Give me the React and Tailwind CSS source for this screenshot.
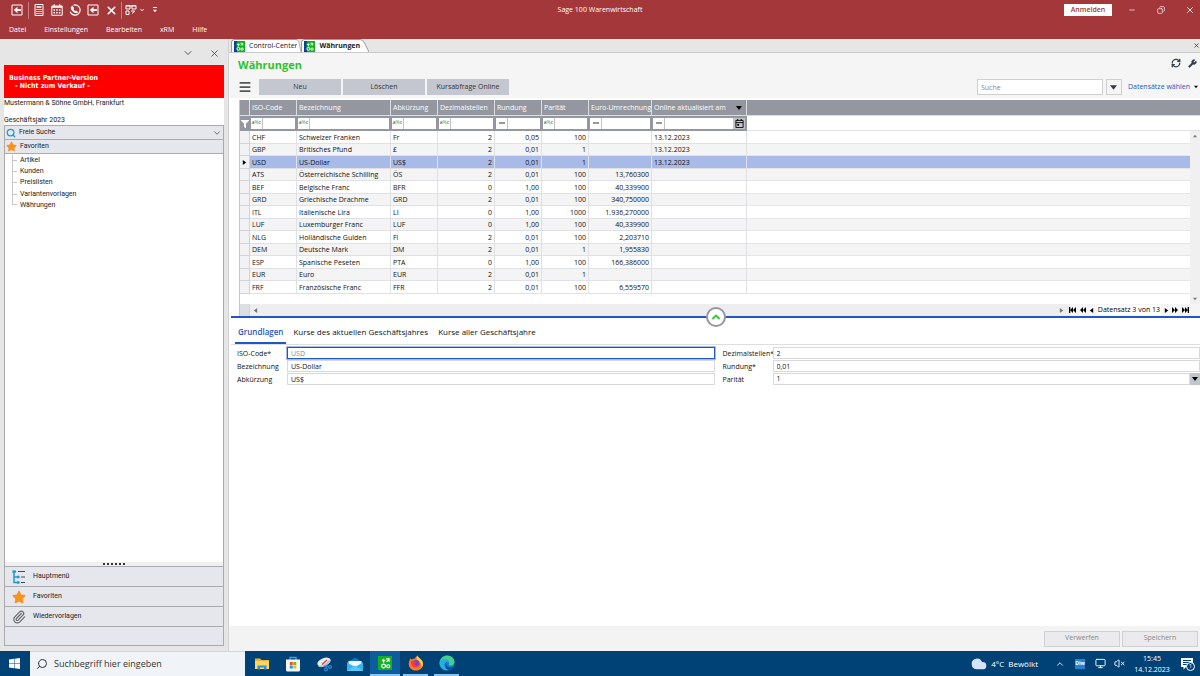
import { useState } from "react";
import {
    ChevronDown,
    ChevronUp,
    Cloud,
    Copy,
    Menu,
    Minus,
    Monitor,
    Paperclip,
    RefreshCw,
    Search,
    VolumeX,
    Wrench,
    X
} from "lucide-react";
import { FaStar, FaFilter } from "react-icons/fa";

const menuItems = ["Datei", "Einstellungen", "Bearbeiten", "xRM", "Hilfe"];

const favorites = ["Artikel", "Kunden", "Preislisten", "Variantenvorlagen", "Währungen"];

const columns = [
    { key: "iso", label: "ISO-Code", width: "w-[47px]", filter: "text" },
    { key: "name", label: "Bezeichnung", width: "w-[94px]", filter: "text" },
    { key: "short", label: "Abkürzung", width: "w-[47px]", filter: "text" },
    { key: "decimals", label: "Dezimalstellen", width: "w-[57px]", filter: "text", right: true },
    { key: "rounding", label: "Rundung", width: "w-[47px]", filter: "equal", right: true },
    { key: "parity", label: "Parität", width: "w-[47px]", filter: "text", right: true },
    { key: "rate", label: "Euro-Umrechnung", width: "w-[63px]", filter: "equal", right: true },
    { key: "updated", label: "Online aktualisiert am", width: "w-[95px]", filter: "equal" }
];

const currencies = [
    { iso: "CHF", name: "Schweizer Franken", short: "Fr", decimals: "2", rounding: "0,05", parity: "100", rate: "", updated: "13.12.2023" },
    { iso: "GBP", name: "Britisches Pfund", short: "£", decimals: "2", rounding: "0,01", parity: "1", rate: "", updated: "13.12.2023" },
    { iso: "USD", name: "US-Dollar", short: "US$", decimals: "2", rounding: "0,01", parity: "1", rate: "", updated: "13.12.2023" },
    { iso: "ATS", name: "Österreichische Schilling", short: "ÖS", decimals: "2", rounding: "0,01", parity: "100", rate: "13,760300", updated: "" },
    { iso: "BEF", name: "Belgische Franc", short: "BFR", decimals: "0", rounding: "1,00", parity: "100", rate: "40,339900", updated: "" },
    { iso: "GRD", name: "Griechische Drachme", short: "GRD", decimals: "2", rounding: "0,01", parity: "100", rate: "340,750000", updated: "" },
    { iso: "ITL", name: "Italienische Lira", short: "LI", decimals: "0", rounding: "1,00", parity: "1000", rate: "1.936,270000", updated: "" },
    { iso: "LUF", name: "Luxemburger Franc", short: "LUF", decimals: "0", rounding: "1,00", parity: "100", rate: "40,339900", updated: "" },
    { iso: "NLG", name: "Holländische Gulden", short: "Fl", decimals: "2", rounding: "0,01", parity: "100", rate: "2,203710", updated: "" },
    { iso: "DEM", name: "Deutsche Mark", short: "DM", decimals: "2", rounding: "0,01", parity: "1", rate: "1,955830", updated: "" },
    { iso: "ESP", name: "Spanische Peseten", short: "PTA", decimals: "0", rounding: "1,00", parity: "100", rate: "166,386000", updated: "" },
    { iso: "EUR", name: "Euro", short: "EUR", decimals: "2", rounding: "0,01", parity: "1", rate: "", updated: "" },
    { iso: "FRF", name: "Französische Franc", short: "FFR", decimals: "2", rounding: "0,01", parity: "100", rate: "6,559570", updated: "" }
];

const detailTabs = ["Grundlagen", "Kurse des aktuellen Geschäftsjahres", "Kurse aller Geschäftsjahre"];

const Triangle = ({ className, points }) => (
    <svg viewBox="0 0 6 6" className={className} fill="currentColor" aria-hidden="true">
        <path d={points} />
    </svg>
);

const DOWN = "M0 1h6L3 5z";
const UP = "M0 5h6L3 1z";
const LEFT = "M5 0v6L1 3z";
const RIGHT = "M1 0v6l4-3z";

// Double arrow of the record navigator, optionally with an end bar
const SkipIcon = ({ bar, back }) => (
    <svg viewBox="0 0 7 6" className={`h-[6px] w-[7px] ${back ? "-scale-x-100" : ""}`} fill="currentColor" aria-hidden="true">
        <path d="M0 0v6l3-3zM3 0v6l3-3z" />
        {bar && <path d="M5.700 0H7v6H5.700z" />}
    </svg>
);

const ExitIcon = () => (
    <svg viewBox="0 0 12 12" className="size-3" fill="none" stroke="currentColor">
        <path d="M1 1h10v10H1z" />
        <path d="M10 6H4" strokeWidth="1.800" />
        <path d="M6.500 2.800v6.400L2.800 6z" fill="currentColor" stroke="none" />
    </svg>
);

const CalculatorIcon = () => (
    <svg viewBox="0 0 12 12" className="size-3" fill="none" stroke="currentColor">
        <path d="M2 .5h8v11H2z" />
        <path d="M3.500 3h5" strokeWidth="1.500" />
        <path d="M3.300 5.500h5.400M3.300 7.500h5.400M3.300 9.500h5.400" strokeWidth="1.200" strokeDasharray="1.400 .6" />
    </svg>
);

const CalendarIcon = ({ className }) => (
    <svg viewBox="0 0 12 12" className={className} fill="none" stroke="currentColor">
        <path d="M.8 2h10.400v9.300H.8z" />
        <path d="M1 3h10" strokeWidth="1.600" />
        <path d="M3.300.3v2M8.700.3v2" strokeWidth="1.200" />
        <path d="M2.500 6h7M2.500 8.800h7" strokeWidth="1.400" strokeDasharray="1.500 1.200" />
    </svg>
);

const DatePickerIcon = () => (
    <svg viewBox="0 0 10 10" className="size-[9px]" fill="none" stroke="currentColor">
        <path d="M1 1.500h8v8H1zM1 4h8" />
        <path d="M3 0v2M7 0v2" />
        <path d="M2.500 5.500h2v2h-2z" fill="currentColor" stroke="none" />
    </svg>
);

const PhoneIcon = () => (
    <svg viewBox="0 0 12 12" className="size-3" fill="none" stroke="currentColor">
        <path d="M4.400 1.200A5.100 5.100 0 1 1 1.200 7.800" strokeWidth="1.200" />
        <path d="M3.200 1.500 1.800 3.200c-.2 3 3.200 6.200 6.200 6l1-1.300-1.800-1.300-1 .7C5.500 6.700 4.800 6 4.500 5.100l.6-1z" fill="currentColor" stroke="none" />
    </svg>
);

const WindowsLayoutIcon = () => (
    <svg viewBox="0 0 12 12" className="size-3" fill="none" stroke="currentColor">
        <path d="M1 1.500h4v3.500H1zM7 1.500h4v3.500H7zM1 7h3v3.500H1zM6 7h3.500" />
        <path d="M1 2h10M7 9.500l3-2.500" />
    </svg>
);

const SageIcon = ({ className, stripe }) => (
    <svg viewBox="0 0 12 12" className={className} aria-hidden="true">
        <rect width="12" height="12" fill="#10b020" />
        {stripe && <path d="M0 0h3.500L2.500 3.500 3.500 12H0z" fill="#0b3f9c" />}
        <g fill="none" stroke="#fff" strokeWidth="1">
            <circle cx="8.800" cy="8.800" r="1.300" />
            <circle cx="4.800" cy="8.600" r="1.600" />
            <path d="M4.800 5.800V3M3.500 4.300 4.800 3l1.300 1.300M7 2.500h2.500V5M7.300 5l2.200-2.200" />
        </g>
    </svg>
);

const TreeIcon = () => (
    <svg viewBox="0 0 14 14" className="size-[14px]" fill="none" strokeWidth="1.500">
        <path d="M2 1v11.500h4M2 7h4M1 1.500h3" stroke="#1c9ad6" />
        <path d="M6 1.500h7M9 7h4M9 12.500h4" stroke="#444b5c" strokeWidth="1" />
        <path d="M5 5.800h2.500v2.400H5zM5 11.300h2.500v2.400H5zM.5.500h3v2.400h-3z" fill="#1c9ad6" />
    </svg>
);

const ExplorerIcon = () => (
    <svg viewBox="0 0 16 16" className="size-4">
        <path d="M1 2.500h5l1.500 1.500H15V13H1z" fill="#f0b22e" />
        <path d="M1 5h14v8H1z" fill="#ffd661" />
        <path d="M3.500 13.500v-4h9v4H10V11.500H6v2z" fill="#2e8fd8" />
    </svg>
);

const StoreIcon = () => (
    <svg viewBox="0 0 16 16" className="size-4">
        <path d="M5 4V1.500h6V4" fill="none" stroke="#38a6e0" strokeWidth="1.300" />
        <path d="M1 3.500h14V14q0 1.500-1.500 1.500h-11Q1 15.500 1 14z" fill="#f4f6f8" />
        <path d="M4.800 6h3v3h-3z" fill="#f25022" />
        <path d="M8.300 6h3v3h-3z" fill="#7fba00" />
        <path d="M4.800 9.500h3v3h-3z" fill="#00a4ef" />
        <path d="M8.300 9.500h3v3h-3z" fill="#ffb900" />
    </svg>
);

const SnippingIcon = () => (
    <svg viewBox="0 0 16 16" className="size-4">
        <ellipse cx="8" cy="6" rx="7" ry="3.800" fill="#e8eaee" transform="rotate(-22 8 6)" />
        <path d="M2 9c3 2 8-1 11-5l1.500 1C12 10 5 13 2 10z" fill="#b9bec8" />
        <path d="M6 8.500 11 4" stroke="#d23c3c" strokeWidth="1.200" />
        <g fill="none" stroke="#2f86d0" strokeWidth="1.200">
            <circle cx="10" cy="13.500" r="1.400" />
            <circle cx="14" cy="11" r="1.400" />
            <path d="m10 12 1-3M13 10.500 8 10" />
        </g>
    </svg>
);

const MailIcon = () => (
    <svg viewBox="0 0 16 16" className="size-4">
        <path d="M0 6.500 8 1.500l8 5V14H0z" fill="#1474c4" />
        <path d="M1.500 5h13v6h-13z" fill="#f3f7fb" />
        <path d="m0 6.500 8 4.500 8-4.500V15H0z" fill="#35b3ee" />
        <path d="M0 15 8 9.500 16 15z" fill="#5cc8f5" />
    </svg>
);

const FirefoxIcon = () => (
    <svg viewBox="0 0 16 16" className="size-4">
        <path d="M2.200 3.200 4 4.800C5 3.500 6 3.500 7.200 3.500 7.400 2 8.500 1 9.600.5c.2 2 3.600 3.300 4.800 6C16.500 11 13 15.500 8 15.500S-.6 11 1.200 6.500c.3-1 .6-2.200 1-3.300z" fill="#ff7a1a" />
        <path d="M9.600.5c.2 2 3.600 3.300 4.800 6 1 2.500.2 4.800-.8 6.200C14 8 11 6 9 4.500 8.500 3 9 1.500 9.600.5z" fill="#ffd52e" />
        <circle cx="8" cy="8.500" r="3.500" fill="#7a3fd1" />
        <path d="M3 6.500c1.500-1 3-.5 4 .3l1.800.2c-.5 1-1.500 1-2 1.500.3 2.500 3.500 2.500 5 1-1 3.500-7 4-8.300 0C3.200 8.500 2.800 7.500 3 6.500z" fill="#f5364c" />
    </svg>
);

const EdgeIcon = () => (
    <svg viewBox="0 0 16 16" className="size-4">
        <circle cx="8" cy="8" r="7.500" fill="#1680d0" />
        <path d="M.6 7.200C1.500 2.500 5 .5 8.200.5c4.500 0 7.300 3.200 7.300 6.300 0 2.200-1.700 3.700-3.800 3.700-1.600 0-2.300-.7-1.800-1.300C10.900 7.500 9.500 5 6.500 5 4 5 1.800 5.500.6 7.200z" fill="#45d08c" />
        <path d="M.6 7.200C2 4.500 4.500 3.800 6.500 4 9 4.200 10.500 6 10.500 7.500L8 6.500C5.500 7 5 9.500 6 12c.8 1.800 2.500 3 4 3C5 16.500-.3 12.500.6 7.200z" fill="#28aee0" />
        <path d="M8 6.500C6.500 8 7 10.500 9 11.700c1.800 1 4 .7 5.300 0-.8 1.500-2.300 2.700-4.300 3.300C6 14 4.500 9 8 6.500z" fill="#0b4f9f" />
    </svg>
);

const TitleBar = () => (
    <header className="bg-[#a4373a] text-white">
        <div className="grid h-5 grid-cols-[1fr_auto_1fr] items-center">
            <div className="flex items-center pl-[11px]">
                <button aria-label="Beenden"><ExitIcon /></button>
                <span className="mr-1 ml-[5px] h-[17px] w-px bg-[#c98082]" />
                <div className="flex gap-[6px]">
                    <button aria-label="Rechner"><CalculatorIcon /></button>
                    <button aria-label="Kalender"><CalendarIcon className="size-3" /></button>
                    <button aria-label="Telefon"><PhoneIcon /></button>
                    <button aria-label="Abmelden"><ExitIcon /></button>
                    <button aria-label="Schließen"><X className="size-[13px]" strokeWidth={3} /></button>
                </div>
                <span className="mr-[3px] ml-[3px] h-[17px] w-px bg-[#c98082]" />
                <button aria-label="Fenster" className="flex items-center gap-[2px]">
                    <WindowsLayoutIcon />
                    <ChevronDown className="size-[6px]" strokeWidth={4} />
                </button>
                <button aria-label="Symbolleiste anpassen" className="ml-2 flex flex-col items-center gap-px">
                    <span className="h-px w-1 bg-white" />
                    <Triangle className="size-1" points={DOWN} />
                </button>
            </div>
            <h1 className="text-[7px]">Sage 100 Warenwirtschaft</h1>
            <div className="flex items-center justify-end pr-[5px]">
                <button className="mr-[15px] h-3 w-12 bg-white text-[7px] leading-3 font-semibold text-[#a4373a]">Anmelden</button>
                <button aria-label="Minimieren" className="flex w-[29px] justify-start pl-px"><Minus className="size-2" strokeWidth={2} /></button>
                <button aria-label="Wiederherstellen" className="flex w-[29px] justify-start pl-px"><Copy className="size-2 -scale-x-100" strokeWidth={2} /></button>
                <button aria-label="Fenster schließen"><X className="size-[10px]" strokeWidth={2} /></button>
            </div>
        </div>
        <nav className="flex h-[19px] items-center gap-[18px] pt-px pl-[9px] text-[7px]">
            {menuItems.map((item) => (
                <button key={item}>{item}</button>
            ))}
        </nav>
    </header>
);

const Sidebar = () => (
    <aside className="flex w-[229px] shrink-0 flex-col border-r border-[#d2d2d2] bg-[#e6e6e6] pr-1 pb-[5px] pl-1 font-['Roboto',sans-serif] text-[7px] text-[#222]">
        <div className="flex h-[26px] shrink-0 items-center justify-end gap-[15px] pt-[2px] pr-1 text-[#555]">
            <button aria-label="Einklappen"><ChevronDown className="size-3" strokeWidth={2} /></button>
            <button aria-label="Bereich schließen"><X className="size-[11px]" strokeWidth={2} /></button>
        </div>
        <div className="flex h-[33px] shrink-0 flex-col justify-center bg-[#ff0000] pl-[5px] font-['DejaVu_Sans_Condensed','DejaVu_Sans',sans-serif] leading-2 font-bold text-white">
            <p>Business Partner-Version</p>
            <p className="pl-[6px]">- Nicht zum Verkauf -</p>
        </div>
        <div className="flex h-[27px] shrink-0 flex-col justify-between bg-white leading-[10px]">
            <p>Mustermann &amp; Söhne GmbH, Frankfurt</p>
            <p>Geschäftsjahr 2023</p>
        </div>
        <div className="flex min-h-0 flex-1 flex-col border border-[#a9abb0] bg-white">
            <button className="flex h-[14px] shrink-0 items-center border-b border-[#a9abb0] bg-[#e5e7ec] px-px">
                <Search className="size-[10px] text-[#1c9ad6]" strokeWidth={3} />
                <span className="flex-1 pl-[3px] text-left">Freie Suche</span>
                <ChevronDown className="size-[10px] text-[#555]" />
            </button>
            <h2 className="flex h-[14px] shrink-0 items-center border-b border-[#a9abb0] bg-[#e5e7ec] px-px">
                <FaStar className="size-[11px] text-[#f7941e]" />
                <span className="pl-[3px]">Favoriten</span>
            </h2>
            <ul className="grid h-[57px] shrink-0 grid-rows-5 pt-px">
                {favorites.map((item, i) => (
                    <li key={item} className="flex items-center pl-[7px]">
                        <span className={i === favorites.length - 1 ? "h-1/2 w-[5px] self-start border-b border-l border-[#c8c8c8]" : "flex h-full w-[5px] items-center border-l border-[#c8c8c8]"}>
                            {i < favorites.length - 1 && <span className="h-px w-full bg-[#c8c8c8]" />}
                        </span>
                        <a href="#" className="pl-[3px] leading-[11px]">{item}</a>
                    </li>
                ))}
            </ul>
            <div className="mt-auto flex h-1 shrink-0 items-center justify-center bg-[#f0f0f0]">
                <span className="w-[22px] border-t-2 border-dotted border-[#333]" />
            </div>
            <nav className="shrink-0 bg-[#e5e7ec]">
                <button className="flex h-5 w-full items-center gap-[7px] border-t border-[#a9abb0] pl-[7px]">
                    <TreeIcon />Hauptmenü
                </button>
                <button className="flex h-5 w-full items-center gap-[7px] border-t border-[#a9abb0] pl-[7px]">
                    <FaStar className="size-[14px] text-[#f7941e]" />Favoriten
                </button>
                <button className="flex h-5 w-full items-center gap-[7px] border-t border-[#a9abb0] pl-[7px]">
                    <Paperclip className="size-[14px] text-[#666]" />Wiedervorlagen
                </button>
                <div className="h-[19px] border-t border-[#a9abb0]" />
            </nav>
        </div>
    </aside>
);

const DocumentTab = ({ label, active }) => (
    <button className="flex h-full items-end" aria-current={active}>
        <span className={`flex h-[13px] items-center gap-1 rounded-tl border-t border-l border-[#9a9a9a] bg-white pl-[2px] text-[7px] text-[#222] ${active ? "font-bold" : ""}`}>
            <SageIcon className="size-[11px]" stripe />
            {label}
        </span>
        <svg viewBox="0 0 9 13" className={active ? "h-[13px] w-[9px]" : "h-[13px] w-1"} preserveAspectRatio="none">
            <path d="M0 .5Q3 .5 4.500 4L9 13H0z" fill="#fff" />
            <path d="M0 .5Q3 .5 4.500 4L9 13" fill="none" stroke="#9a9a9a" />
        </svg>
    </button>
);

const FilterCell = ({ column }) => (
    <div className="flex h-[13px] items-stretch bg-[#9497a0] p-px pr-[2px]">
        <span className="flex w-3 shrink-0 items-center justify-center border-r border-[#c4c4c4] bg-white text-[5px] text-[#333]">
            {column.filter === "equal" ? (
                <span className="h-[2px] w-[6px] bg-[#999]" />
            ) : (
                <span>a<span className="text-[#2fb52f]">%</span>c</span>
            )}
        </span>
        <input aria-label={`Filter ${column.label}`} className="min-w-0 flex-1 bg-white outline-none" />
        {column.key === "updated" && (
            <button aria-label="Datum wählen" className="flex w-3 items-center justify-center bg-[#c3c5cc] text-black">
                <DatePickerIcon />
            </button>
        )}
    </div>
);

const CurrencyTable = ({ selected, onSelect }) => (
    <table className="w-full table-fixed border-separate border-spacing-0 border-l border-[#c4c6cc] text-[7px] text-[#111]">
        <colgroup>
            <col className="w-[10px]" />
            {columns.map((column) => (
                <col key={column.key} className={column.width} />
            ))}
            <col />
            <col className="w-[10px]" />
        </colgroup>
        <thead>
            <tr className="h-4 bg-[#9497a0] text-white">
                <th className="border-r border-b border-[#dcdde0] p-0" />
                {columns.map((column) => (
                    <th key={column.key} className="border-r border-b border-[#dcdde0] p-0 pl-[2px] text-left font-normal whitespace-nowrap">
                        <span className="flex items-center justify-between leading-3">
                            {column.label}
                            {column.key === "updated" && <Triangle className="mr-1 size-[6px] text-black" points={DOWN} />}
                        </span>
                    </th>
                ))}
                <th colSpan={2} className="border-b border-[#dcdde0] p-0" />
            </tr>
            <tr className="h-[15px]">
                <td className="bg-[#9497a0] p-0 text-white"><FaFilter className="mx-auto size-2" /></td>
                {columns.map((column) => (
                    <td key={column.key} className="border-b border-[#9497a0] bg-[#9497a0] p-0"><FilterCell column={column} /></td>
                ))}
                <td colSpan={2} className="border-b border-[#e2e2e4] p-0" />
            </tr>
        </thead>
        <tbody>
            {currencies.map((row, i) => {
                const active = row.iso === selected;
                return (
                    <tr
                        key={row.iso}
                        onClick={() => onSelect(row.iso)}
                        className={`odd:h-[13px] even:h-3 ${active ? "bg-[#a8bbe8]" : "odd:bg-white even:bg-[#f4f4f4]"}`}
                    >
                        <td className="border-r border-b border-[#d0d2d8] bg-[#f2f2f4] p-0">
                            {active && <Triangle className="mx-auto size-[5px] text-black" points={RIGHT} />}
                        </td>
                        {columns.map((column) => (
                            <td
                                key={column.key}
                                className={`overflow-hidden border-r border-b border-[#e0e1e4] p-0 px-[2px] leading-[11px] whitespace-nowrap ${column.right ? "text-right" : ""}`}
                            >
                                {row[column.key]}
                            </td>
                        ))}
                        <td className="border-b border-[#e6e6e8] p-0" />
                        {i === 0 && (
                            <td rowSpan={currencies.length + 1} className="h-px bg-[#f0f0f1] p-0 text-[#777]">
                                <div className="flex h-full flex-col items-center justify-between py-[3px]">
                                    <Triangle className="size-1" points={UP} />
                                    <Triangle className="size-1" points={DOWN} />
                                </div>
                            </td>
                        )}
                    </tr>
                );
            })}
            <tr className="h-[10px]">
                <td colSpan={columns.length + 2} className="p-0" />
            </tr>
        </tbody>
    </table>
);

const RecordNavigator = () => (
    <div className="flex h-3 items-center border-l border-[#c4c6cc] bg-[#eeeef0] text-[#777]">
        <span className="h-full w-[10px] border-r border-[#d0d2d8] bg-[#dddfe3]" />
        <button aria-label="Nach links" className="pl-[3px]"><Triangle className="size-[5px]" points={LEFT} /></button>
        <button aria-label="Nach rechts" className="mr-[5px] ml-auto"><Triangle className="size-[5px]" points={RIGHT} /></button>
        <div className="flex h-full items-center gap-[3px] bg-[#f5f5f6] pr-[11px] text-[7px] text-black">
            <button aria-label="Erster Datensatz"><SkipIcon bar back /></button>
            <button aria-label="Seite zurück"><SkipIcon back /></button>
            <button aria-label="Vorheriger Datensatz"><Triangle className="size-[5px]" points={LEFT} /></button>
            <span className="bg-white px-px leading-[10px]">Datensatz 3 von 13</span>
            <button aria-label="Nächster Datensatz"><Triangle className="size-[5px]" points={RIGHT} /></button>
            <button aria-label="Seite vor"><SkipIcon /></button>
            <button aria-label="Letzter Datensatz"><SkipIcon bar /></button>
        </div>
    </div>
);

const Field = ({ id, label, value, disabled }) => (
    <>
        <label htmlFor={id} className="leading-[11px]">{label}</label>
        <input
            id={id}
            key={value}
            defaultValue={value}
            readOnly={disabled}
            className={`h-3 w-full min-w-0 border bg-white px-[3px] outline-none ${disabled ? "border-[#1f57c3] text-[#888] ring-1 ring-[#1f57c3]/40" : "border-[#d9d9db]"}`}
        />
    </>
);

const Details = ({ row }) => {
    const [tab, setTab] = useState(detailTabs[0]);

    return (
        <section className="relative ml-[2px] flex-1 border-t-2 border-[#1f57c3]">
            <button
                aria-label="Details einklappen"
                className="absolute -top-[11px] left-1/2 flex size-5 -translate-x-1/2 items-center justify-center rounded-full border-2 border-[#9497a0] bg-white"
            >
                <ChevronUp className="size-3 text-[#3cc73c]" strokeWidth={4} />
            </button>
            <div className="flex h-[27px] gap-1 border-b border-[#dedede] pl-1 text-[8px]">
                {detailTabs.map((item) => (
                    <button
                        key={item}
                        onClick={() => setTab(item)}
                        className={`border-b-2 px-[3px] pt-[3px] ${item === tab ? "border-[#1f57c3] font-semibold text-[#1f57c3]" : "border-transparent text-[#111]"}`}
                    >
                        {item}
                    </button>
                ))}
            </div>
            <form className="grid grid-cols-2 gap-2 pt-[2px] pl-[6px] text-[7px] text-[#111]">
                <div className="grid grid-cols-[50px_1fr] items-center gap-y-px">
                    <Field id="iso" label="ISO-Code*" value={row.iso} disabled />
                    <Field id="name" label="Bezeichnung" value={row.name} />
                    <Field id="short" label="Abkürzung" value={row.short} />
                </div>
                <div className="grid grid-cols-[50px_1fr] items-center gap-y-px">
                    <Field id="decimals" label="Dezimalstellen*" value={row.decimals} />
                    <Field id="rounding" label="Rundung*" value={row.rounding} />
                    <label htmlFor="parity" className="leading-[11px]">Parität</label>
                    <div className="flex h-3">
                        <select id="parity" className="min-w-0 flex-1 appearance-none border border-[#d9d9db] bg-white px-[3px]">
                            <option>{row.parity}</option>
                        </select>
                        <span className="flex w-[10px] items-center justify-center bg-[#c3c5cc]"><Triangle className="size-[6px] text-black" points={DOWN} /></span>
                    </div>
                </div>
            </form>
        </section>
    );
};

const Taskbar = () => (
    <footer className="flex h-[25px] shrink-0 items-center bg-[#004275] text-[8px] text-white">
        <button aria-label="Start" className="flex h-full w-[30px] items-center justify-center pr-[2px]">
            <svg viewBox="0 0 11 11" className="size-[11px]" fill="currentColor">
                <path d="M0 1.500 5 .8v4.400H0zM5.500.7 11 0v5.200H5.500zM0 5.800h5v4.400l-5-.7zM5.500 5.800H11V11l-5.500-.7z" />
            </svg>
        </button>
        <label className="flex h-full w-[215px] items-center gap-[6px] border-t border-[#cfd6dd] bg-[#f0f4f8] pl-[6px] text-[#333]">
            <Search className="size-3 -scale-x-100" strokeWidth={2} />
            <input placeholder="Suchbegriff hier eingeben" className="min-w-0 flex-1 text-[9px] outline-none placeholder:text-[#333]" />
        </label>
        <div className="flex h-full items-center pl-px">
            <button aria-label="Explorer" className="flex h-full w-[31px] items-center justify-center"><ExplorerIcon /></button>
            <button aria-label="Store" className="flex h-full w-[31px] items-center justify-center"><StoreIcon /></button>
            <button aria-label="Snipping Tool" className="flex h-full w-[31px] items-center justify-center"><SnippingIcon /></button>
            <button aria-label="Mail" className="flex h-full w-[31px] items-center justify-center"><MailIcon /></button>
            <button aria-label="Sage 100" className="flex h-full w-[30px] items-center justify-center border-b-2 border-[#8cc4f0] bg-[#0c5c9e]"><SageIcon className="size-[14px]" /></button>
            <button aria-label="Firefox" className="mx-[3px] flex h-full w-[25px] items-center justify-center border-b-2 border-[#8cc4f0]"><FirefoxIcon /></button>
            <button aria-label="Edge" className="mx-[3px] flex h-full w-[25px] items-center justify-center border-b-2 border-[#8cc4f0]"><EdgeIcon /></button>
        </div>
        <div className="ml-auto flex items-center pr-[6px]">
            <button className="flex items-center gap-1">
                <Cloud className="size-4 fill-[#d5e3fa] text-[#d5e3fa]" />
                <span>4°C</span>
                <span>Bewölkt</span>
            </button>
            <button aria-label="Ausgeblendete Symbole" className="ml-[17px]"><ChevronUp className="size-[10px]" /></button>
            <span className="ml-[10px] flex size-[10px] items-center justify-center bg-[#1c86d0] text-[5px] font-bold">Diw</span>
            <Monitor className="ml-[10px] size-[11px]" />
            <VolumeX className="ml-2 size-[11px]" />
            <time className="ml-[7px] flex w-10 flex-col items-center text-[7px] leading-[11px]">
                <span>15:45</span>
                <span>14.12.2023</span>
            </time>
            <button aria-label="Benachrichtigungen" className="relative ml-2">
                <svg viewBox="0 0 14 14" className="size-[14px]">
                    <path d="M1 1h12v9H6l-2.500 2.500V10H1z" fill="#fff" />
                    <path d="M3 3.500h8M3 5.500h8M3 7.500h5" stroke="#004275" />
                </svg>
                <span className="absolute top-[5px] left-[6px] flex size-[9px] items-center justify-center rounded-full border border-white bg-[#004275] text-[6px]">1</span>
            </button>
        </div>
    </footer>
);

const App = () => {
    const [selected, setSelected] = useState("USD");
    const row = currencies.find((item) => item.iso === selected);

    return (
        <div className="flex h-screen flex-col overflow-hidden bg-white font-['Open_Sans','Noto_Sans',sans-serif]">
            <TitleBar />
            <div className="flex min-h-0 flex-1">
                <Sidebar />
                <main className="flex min-w-0 flex-1 flex-col">
                    <div className="flex h-[14px] shrink-0 items-end border-b border-[#c9c9c9] bg-[#e6e6e6] pl-[2px]">
                        <DocumentTab label="Control-Center" />
                        <DocumentTab label="Währungen" active />
                        <button aria-label="Tab schließen" className="ml-auto self-center"><X className="size-[7px]" /></button>
                    </div>
                    <div className="shrink-0 bg-[#f5f5f5] pl-[9px]">
                        <div className="flex h-[26px] items-center justify-between pr-[3px]">
                            <h2 className="pb-[2px] text-[11px] font-bold text-[#2ec22e]">Währungen</h2>
                            <div className="flex gap-[7px] pb-[6px] text-[#333a4d]">
                                <button aria-label="Aktualisieren"><RefreshCw className="size-[10px]" strokeWidth={3} /></button>
                                <button aria-label="Einstellungen"><Wrench className="size-[9px] fill-[#333a4d]" /></button>
                            </div>
                        </div>
                        <div className="flex h-[19px] items-start gap-[2px] pr-[2px] text-[7px] text-[#333]">
                            <button aria-label="Menü" className="mt-px mr-[5px] text-[#555]"><Menu className="size-[14px]" strokeWidth={3} /></button>
                            <button className="h-4 w-[82px] bg-[#c5c7d0]">Neu</button>
                            <button className="h-4 w-[82px] bg-[#c5c7d0]">Löschen</button>
                            <button className="h-4 w-[82px] bg-[#c5c7d0]">Kursabfrage Online</button>
                            <input aria-label="Suche" placeholder="Suche" className="ml-auto h-4 w-[126px] border border-[#d0d0d0] bg-white px-[3px] outline-none placeholder:text-[#888]" />
                            <button aria-label="Filter" className="ml-px flex h-4 w-4 items-center justify-center border border-[#d0d0d0] text-[#333a4d]"><Triangle className="size-[7px]" points={DOWN} /></button>
                            <button className="ml-1 flex h-4 items-center gap-1 text-[#1f57c3]">
                                Datensätze wählen
                                <Triangle className="size-1 text-black" points={DOWN} />
                            </button>
                        </div>
                    </div>
                    <div className="shrink-0 pt-[2px] pl-[10px]">
                        <CurrencyTable selected={selected} onSelect={setSelected} />
                        <RecordNavigator />
                    </div>
                    <Details row={row} />
                    <div className="flex h-[25px] shrink-0 items-center justify-end gap-[2px] bg-[#f3f3f3] pr-[2px] text-[7px] text-[#888]">
                        <button className="h-4 w-[76px] border border-[#d0d0d4] bg-[#ebebee]">Verwerfen</button>
                        <button className="h-4 w-[76px] border border-[#d0d0d4] bg-[#ebebee]">Speichern</button>
                    </div>
                </main>
            </div>
            <Taskbar />
        </div>
    );
};

export default App;
